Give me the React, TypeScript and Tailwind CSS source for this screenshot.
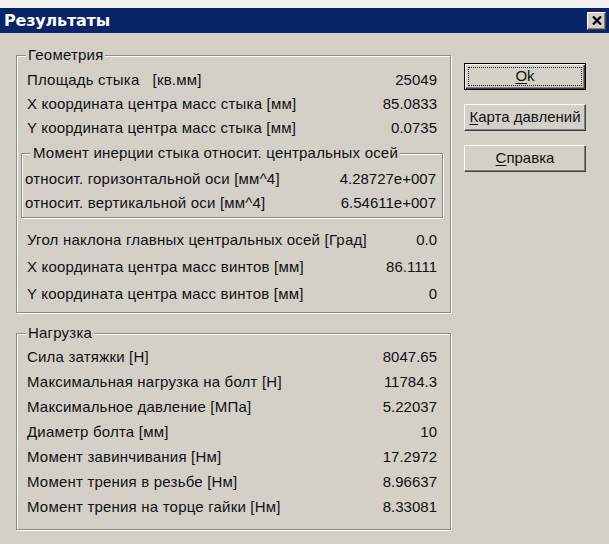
import React from "react";

type Row = { label: string; value: string };

const geometryTop: Row[] = [
  { label: "Площадь стыка   [кв.мм]", value: "25049" },
  { label: "X координата центра масс стыка [мм]", value: "85.0833" },
  { label: "Y координата центра масс стыка [мм]", value: "0.0735" },
];

const inertia: Row[] = [
  { label: "относит. горизонтальной оси [мм^4]", value: "4.28727e+007" },
  { label: "относит. вертикальной оси [мм^4]", value: "6.54611e+007" },
];

const geometryBottom: Row[] = [
  { label: "Угол наклона главных центральных осей [Град]", value: "0.0" },
  { label: "X координата центра масс винтов [мм]", value: "86.1111" },
  { label: "Y координата центра масс винтов [мм]", value: "0" },
];

const load: Row[] = [
  { label: "Сила затяжки [Н]", value: "8047.65" },
  { label: "Максимальная нагрузка на болт [Н]", value: "11784.3" },
  { label: "Максимальное давление [МПа]", value: "5.22037" },
  { label: "Диаметр болта [мм]", value: "10" },
  { label: "Момент завинчивания [Нм]", value: "17.2972" },
  { label: "Момент трения в резьбе [Нм]", value: "8.96637" },
  { label: "Момент трения на торце гайки [Нм]", value: "8.33081" },
];

const font = "font-['Liberation_Sans',Arial,sans-serif]";

function GroupBox({
  title,
  className,
  children,
}: {
  title: string;
  className?: string;
  children: React.ReactNode;
}) {
  return (
    <fieldset
      className={`border border-[#8c8a86] shadow-[inset_1px_1px_0_#ffffff,1px_1px_0_#ffffff] ${className ?? ""}`}
    >
      <legend className="ml-[9px] px-[2px] h-[16px] leading-[16px] bg-[#d4d0c8] text-[15px] tracking-[0.2px] text-[#111]">
        {title}
      </legend>
      {children}
    </fieldset>
  );
}

function ValueRow({ row, h, px }: { row: Row; h: string; px: string }) {
  return (
    <div className={`flex items-center justify-between ${h} ${px} text-[15px] text-[#111] whitespace-pre`}>
      <span className="tracking-[0.2px]">{row.label}</span>
      <span>{row.value}</span>
    </div>
  );
}

function Mnemonic({ first, rest }: { first: string; rest: string }) {
  return (
    <span>
      <span className="underline underline-offset-2">{first}</span>
      {rest}
    </span>
  );
}

function CloseIcon() {
  return (
    <svg width="10" height="9" viewBox="0 0 10 9" className="block">
      <path d="M1 0.5 L9 8.5 M9 0.5 L1 8.5" stroke="#000" strokeWidth="2.2" />
    </svg>
  );
}

export default function App() {
  return (
    <div className={`w-[609px] h-[544px] bg-[#f3f2ef] pt-[8px] ${font}`}>
      <div className="h-[536px] bg-[#d4d0c8] flex flex-col">
        {/* caption */}
        <div className="h-[25px] bg-[#0a246a] flex items-center justify-between pl-[4px] pr-[3px]">
          <span className="font-['DejaVu_Sans',Verdana,sans-serif] font-bold text-[16px] text-white tracking-[-0.2px]">
            Результаты
          </span>
          <div className="w-[19px] h-[18px] bg-[#d4d0c8] flex items-center justify-center border border-t-white border-l-white border-r-[#404040] border-b-[#404040] shadow-[inset_-1px_-1px_0_#808080]">
            <CloseIcon />
          </div>
        </div>

        <div className="flex pl-[16px] pt-[14px]">
          {/* left column with the two group boxes */}
          <div className="w-[435px] flex flex-col">
            <GroupBox title="Геометрия">
              <div className="pt-[5px] pb-[4px]">
                {geometryTop.map((r) => (
                  <ValueRow key={r.label} row={r} h="h-[24px]" px="pl-[10px] pr-[13px]" />
                ))}
                <GroupBox title="Момент инерции стыка относит. центральных осей" className="mt-[5px] ml-[4px] mr-[7px]">
                  <div className="pt-[6px] pb-[2px]">
                    {inertia.map((r) => (
                      <ValueRow key={r.label} row={r} h="h-[24px]" px="pl-[3px] pr-[6px]" />
                    ))}
                  </div>
                </GroupBox>
                <div className="mt-[9px]">
                  {geometryBottom.map((r) => (
                    <ValueRow key={r.label} row={r} h="h-[27px]" px="pl-[10px] pr-[13px]" />
                  ))}
                </div>
              </div>
            </GroupBox>

            <GroupBox title="Нагрузка" className="mt-[12px]">
              <div className="pt-[4px] pb-[9px]">
                {load.map((r) => (
                  <ValueRow key={r.label} row={r} h="h-[25px]" px="pl-[10px] pr-[13px]" />
                ))}
              </div>
            </GroupBox>
          </div>

          {/* command buttons */}
          <div className="ml-[13px] w-[122px] flex flex-col gap-[14px] pt-[16px] text-[15px] text-[#111]">
            <div className="h-[27px] border border-black shadow-[inset_1px_1px_0_#ffffff,inset_-1px_-1px_0_#404040,inset_-2px_-2px_0_#808080] p-[3px]">
              <div className="h-full border border-dotted border-[#222] flex items-center justify-center">
                <Mnemonic first="O" rest="k" />
              </div>
            </div>
            <div className="h-[27px] flex items-center justify-center border border-t-white border-l-white border-r-[#404040] border-b-[#404040] shadow-[inset_-1px_-1px_0_#808080]">
              <Mnemonic first="К" rest="арта давлений" />
            </div>
            <div className="h-[27px] flex items-center justify-center border border-t-white border-l-white border-r-[#404040] border-b-[#404040] shadow-[inset_-1px_-1px_0_#808080]">
              <Mnemonic first="С" rest="правка" />
            </div>
          </div>
        </div>
      </div>
    </div>
  );
}
